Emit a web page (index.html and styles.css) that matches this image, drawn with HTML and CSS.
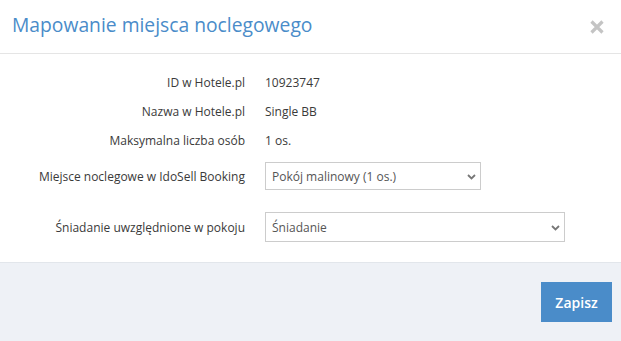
FILE: index.html
```html
<!DOCTYPE html>
<html lang="pl">
<head>
  <meta charset="utf-8">
  <link rel="stylesheet" href="styles.css">
</head>
<body>
  <div class="modal">
    <div class="modal-header">
      <h1 class="modal-title">Mapowanie miejsca noclegowego</h1>
      <button class="close" aria-label="Zamknij">
        <svg width="14" height="14" viewBox="0 0 14 14"><path d="M1.5 1.5 L12.5 12.5 M12.5 1.5 L1.5 12.5" stroke="#c4c4c4" stroke-width="3.2" fill="none"/></svg>
      </button>
    </div>

    <div class="modal-body">
      <div class="row">
        <label>ID w Hotele.pl</label>
        <span class="value">10923747</span>
      </div>
      <div class="row">
        <label>Nazwa w Hotele.pl</label>
        <span class="value">Single BB</span>
      </div>
      <div class="row">
        <label>Maksymalna liczba osób</label>
        <span class="value">1 os.</span>
      </div>
      <div class="row row-select first">
        <label>Miejsce noclegowe w IdoSell Booking</label>
        <div class="select-wrap narrow">
          <select><option>Pokój malinowy (1 os.)</option></select>
          <svg class="chevron" width="9" height="6" viewBox="0 0 9 6"><path d="M1 1 L4.5 4.5 L8 1" stroke="#777" stroke-width="1.8" fill="none"/></svg>
        </div>
      </div>
      <div class="row row-select second">
        <label>Śniadanie uwzględnione w pokoju</label>
        <div class="select-wrap wide">
          <select><option>Śniadanie</option></select>
          <svg class="chevron" width="9" height="6" viewBox="0 0 9 6"><path d="M1 1 L4.5 4.5 L8 1" stroke="#777" stroke-width="1.8" fill="none"/></svg>
        </div>
      </div>
    </div>

    <div class="modal-footer">
      <button class="btn-primary">Zapisz</button>
    </div>
  </div>
</body>
</html>
```

FILE: styles.css
```css
:root {
  --blue: #4a8cc9;
  --text: #3a3a3a;
  --border: #ccc;
  --footer-bg: #eef1f6;
}

* {
  box-sizing: border-box;
}

html, body {
  height: 100%;
}

body {
  margin: 0;
  background: #fff;
  color: var(--text);
  font-family: "Open Sans", "Noto Sans", sans-serif;
  font-size: 12px;
}

.modal {
  display: flex;
  flex-direction: column;
  height: 100%;
}

.modal-header {
  display: flex;
  align-items: center;
  justify-content: space-between;
  height: 54px;
  padding: 0 17px 4px 12px;
  border-bottom: 1px solid #e5e5e5;
}

.modal-title {
  margin: 0;
  font-size: 19.3px;
  font-weight: 400;
  color: var(--blue);
}

.close {
  background: none;
  border: none;
  padding: 0;
  width: 14px;
  height: 14px;
  cursor: pointer;
  display: flex;
  margin-top: 4px;
}

.modal-body {
  padding: 14px 0 20px;
}

.row {
  display: grid;
  grid-template-columns: 245px 1fr;
  column-gap: 20px;
  align-items: center;
  height: 29px;
}

.row label {
  text-align: right;
}

.row-select.first {
  margin-top: 7px;
  height: 28px;
}

.row-select.second {
  margin-top: 22px;
  height: 30px;
}

.select-wrap {
  position: relative;
  height: 100%;
}

.select-wrap.narrow {
  width: 216px;
}

.select-wrap.wide {
  width: 300px;
}

.select-wrap select {
  appearance: none;
  -webkit-appearance: none;
  width: 100%;
  height: 100%;
  border: 1px solid var(--border);
  border-radius: 0;
  background: #fff;
  color: #555;
  font-family: inherit;
  font-size: 12px;
  padding: 0 20px 0 6px;
  outline: none;
}

.chevron {
  position: absolute;
  right: 5px;
  top: 50%;
  margin-top: -2px;
  pointer-events: none;
}

.modal-footer {
  flex: 1;
  display: flex;
  justify-content: flex-end;
  align-items: flex-start;
  background: var(--footer-bg);
  border-top: 1px solid #e2e6eb;
  padding: 19px 9px 0 0;
}

.btn-primary {
  width: 71px;
  height: 40px;
  border: none;
  background: var(--blue);
  color: #fff;
  font-family: inherit;
  font-size: 14px;
  font-weight: 600;
  cursor: pointer;
}
```
